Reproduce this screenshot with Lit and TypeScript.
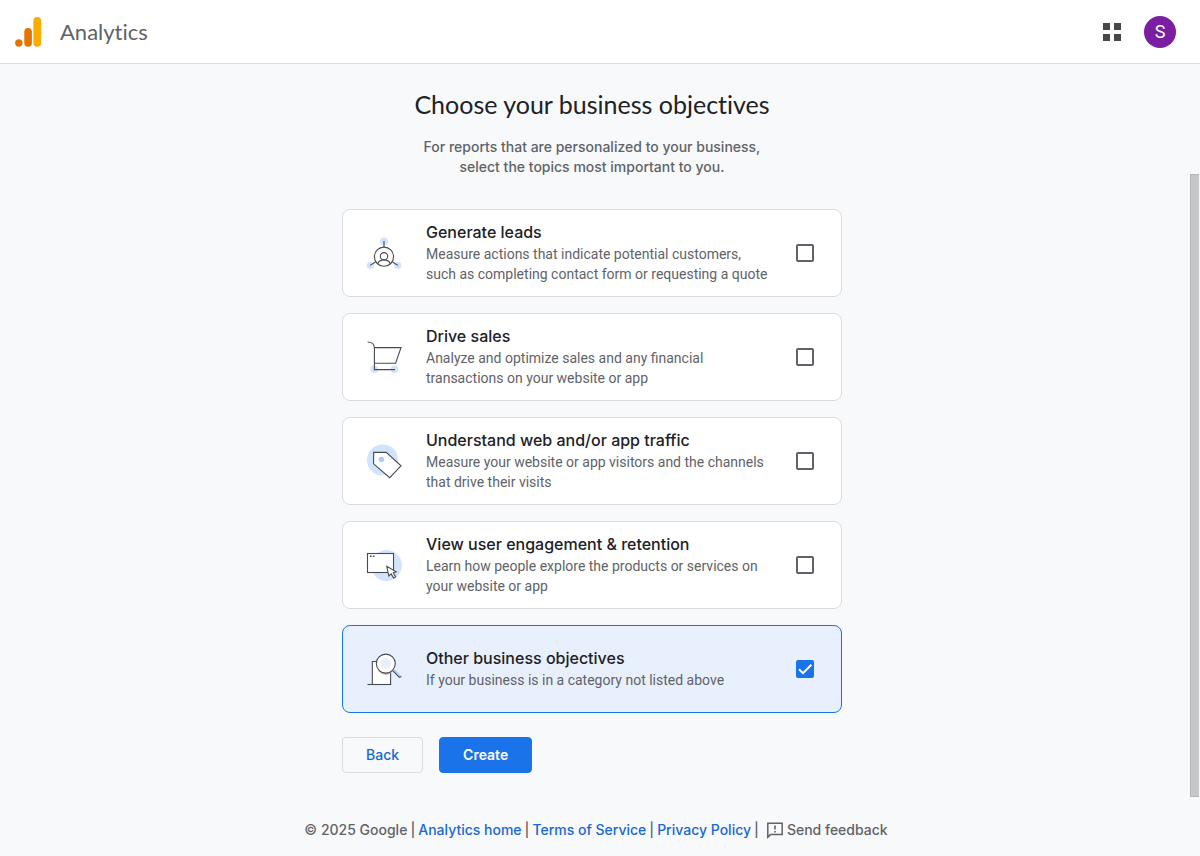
import { LitElement, html, css, svg, TemplateResult } from "lit";
import { customElement, property, state } from "lit/decorators.js";
import { classMap } from "lit/directives/class-map.js";

const leadsIcon = svg`
  <g fill="#d2e3fc"><circle cx="18" cy="6.5" r="4"/><circle cx="4.4" cy="30.5" r="3.6"/><circle cx="31.8" cy="30.5" r="3.6"/></g>
  <g fill="none" stroke="#474b50" stroke-width="1.1">
    <circle cx="18" cy="21.7" r="9.6" fill="#fff"/>
    <circle cx="18" cy="21.3" r="3.7"/>
    <path d="M11.8 29 a6.3 5 0 0 1 12.4 0 M18 6v6 M9.6 27 L4 30.4 M26.4 27 L32 30.4"/>
  </g>`;

const cartIcon = svg`
  <g fill="#d2e3fc"><circle cx="8.3" cy="30.3" r="3.8"/><circle cx="28.5" cy="30.3" r="3.8"/></g>
  <g fill="none" stroke="#474b50" stroke-width="1.1">
    <path d="M1.6 3 C5.4 3 8.4 4.8 8.4 9 V30.6 H29"/>
    <path d="M8.4 8.6 H35 L29.6 24.2 H8.4"/>
  </g>`;

const tagIcon = svg`
  <circle cx="16.6" cy="17" r="15.6" fill="#d2e3fc"/>
  <path d="M7.6 9.4 H20.2 L35 22.8 L23.7 34.7 L7.6 20.8 Z" fill="#fff" stroke="#474b50" stroke-width="1.1"/>
  <circle cx="15.4" cy="16.4" r="2.7" fill="#aecbfa"/>`;

const browserIcon = svg`
  <circle cx="20.5" cy="18.5" r="15.4" fill="#d2e3fc"/>
  <rect x="1.5" y="6.5" width="26" height="19" fill="#fff" stroke="#474b50" stroke-width="1.1"/>
  <path d="M4 9.3 h1.6 M6.8 9.3 h1.6" stroke="#474b50" stroke-width="1.4"/>
  <path d="M20.8 19.3 L22.8 29 L25.2 26.9 L27.6 31 L29.6 29.9 L27.3 25.8 L30.2 24.8 Z" fill="#fff" stroke="#474b50" stroke-width="1.1"/>`;

const searchIcon = svg`
  <path d="M6.3 33.5 V10.5 H24.6 V33.5" fill="#fff" stroke="#474b50" stroke-width="1.1"/>
  <path d="M1.4 33.5 H25.2" stroke="#474b50" stroke-width="1.1"/>
  <path d="M13 19.5 Q19.5 26 24.6 20.8" fill="none" stroke="#bdc1c6" stroke-width="2"/>
  <circle cx="19.8" cy="12.6" r="9.5" fill="#fff" stroke="#474b50" stroke-width="1.1"/>
  <circle cx="19.8" cy="12.6" r="5.4" fill="#e8f0fe"/>
  <path d="M28 19 L34.4 25.6" stroke="#aecbfa" stroke-width="2"/>
  <path d="M26.4 19.4 L33.4 26.4 L35.4 25.6" fill="none" stroke="#474b50" stroke-width="1.1"/>`;

interface Objective {
  id: string;
  title: string;
  text: string;
  icon: TemplateResult<2>;
}

const objectives: Objective[] = [
  { id: "leads", title: "Generate leads", text: "Measure actions that indicate potential customers, such as completing contact form or requesting a quote", icon: leadsIcon },
  { id: "sales", title: "Drive sales", text: "Analyze and optimize sales and any financial transactions on your website or app", icon: cartIcon },
  { id: "traffic", title: "Understand web and/or app traffic", text: "Measure your website or app visitors and the channels that drive their visits", icon: tagIcon },
  { id: "engagement", title: "View user engagement & retention", text: "Learn how people explore the products or services on your website or app", icon: browserIcon },
  { id: "other", title: "Other business objectives", text: "If your business is in a category not listed above", icon: searchIcon },
];

@customElement("objective-card")
class ObjectiveCard extends LitElement {
  @property({ attribute: false }) item!: Objective;
  @property({ type: Boolean }) checked = false;

  static styles = css`
    :host { display: block; }
    .card {
      display: flex; align-items: center; box-sizing: border-box; min-height: 88px;
      padding: 8px 27px 8px 23px; border: 1px solid #dadce0; border-radius: 8px;
      background: #fff; cursor: pointer;
    }
    .card.selected { background: #e8f0fe; border-color: #1a73e8; }
    .icon { flex: none; width: 36px; height: 36px; margin-right: 24px; }
    .copy { flex: 1; min-width: 0; margin-right: 24px; }
    .title { display: block; margin-bottom: 2px; font: 500 16px/20px Inter, "Open Sans", sans-serif; color: #202124; }
    .text { display: block; font: 400 14px/20px Roboto, sans-serif; color: #5f6368; }
    .box { display: grid; flex: none; }
    .box > * { grid-area: 1 / 1; }
    .input {
      appearance: none; box-sizing: border-box; width: 18px; height: 18px; margin: 0;
      border: 2px solid #5f6368; border-radius: 2px; background: transparent; cursor: pointer;
    }
    .input:checked { background: #1a73e8; border-color: #1a73e8; }
    .tick { width: 18px; height: 18px; pointer-events: none; }
  `;

  private toggle(e: Event) {
    this.checked = (e.target as HTMLInputElement).checked;
  }

  render() {
    return html`
      <label class=${classMap({ card: true, selected: this.checked })} for="choice">
        <svg class="icon" viewBox="0 0 36 36" aria-hidden="true">${this.item.icon}</svg>
        <span class="copy">
          <span class="title">${this.item.title}</span>
          <span class="text">${this.item.text}</span>
        </span>
        <span class="box">
          <input class="input" id="choice" type="checkbox" .checked=${this.checked} @change=${this.toggle}>
          ${this.checked
            ? html`<svg class="tick" viewBox="0 0 18 18" aria-hidden="true"><path d="M3 9.3 L7 13.2 L15.4 4.8" fill="none" stroke="#fff" stroke-width="2"/></svg>`
            : null}
        </span>
      </label>`;
  }
}

@customElement("app-root")
class AppRoot extends LitElement {
  @state() private selected = new Set(["other"]);

  static styles = css`
    :host {
      display: flex; flex-direction: column; min-height: 100vh;
      background: #f8f9fa; color: #202124; font-family: Inter, "Open Sans", sans-serif;
    }
    .top {
      display: flex; align-items: center; box-sizing: border-box; height: 64px;
      padding: 0 24px 0 12px; background: #fff; border-bottom: 1px solid #dadce0;
    }
    .logo { width: 32px; height: 32px; margin-right: 16px; }
    .product { font: 400 22px/28px Lato, sans-serif; font-variant-ligatures: none; color: #5f6368; }
    .actions { display: flex; align-items: center; gap: 20px; margin-left: auto; }
    .apps { display: flex; padding: 0; border: 0; background: none; cursor: pointer; }
    .apps svg { width: 24px; height: 24px; }
    .avatar {
      width: 32px; height: 32px; padding: 0; border: 0; border-radius: 50%;
      background: #7b1fa2; color: #fff; font: 400 18px/32px Roboto, sans-serif; cursor: pointer;
    }
    .body { display: flex; flex: 1; }
    .page { flex: 1; min-width: 0; display: flex; flex-direction: column; }
    .main { box-sizing: border-box; width: 100%; max-width: 500px; margin: 0 auto; padding-top: 25px; }
    .heading { margin: 0 0 18px; font: 400 25px/30px Lato, sans-serif; font-variant-ligatures: none; text-align: center; }
    .intro {
      max-width: 352px; margin: 0 auto 32px; text-align: center;
      font-weight: 500; font-size: 14px; line-height: 20px; color: #5f6368;
    }
    .list { display: grid; gap: 16px; }
    .buttons { display: flex; gap: 16px; margin-top: 24px; }
    .button {
      height: 36px; padding: 0 23px; border: 1px solid #dadce0; border-radius: 4px;
      background: transparent; color: #1967d2; font: 500 14px/20px Inter, "Open Sans", sans-serif; cursor: pointer;
    }
    .button.primary { background: #1a73e8; border-color: #1a73e8; color: #fff; font-weight: 600; }
    .footer {
      display: flex; flex-wrap: wrap; justify-content: center; align-items: center; gap: 3px;
      padding: 47px 0 16px 8px; font-weight: 500; font-size: 14px; line-height: 20px; color: #5f6368;
    }
    .footer a { color: #1967d2; text-decoration: none; }
    .feedback {
      display: flex; align-items: center; gap: 3px; margin-left: 4px; padding: 0; border: 0;
      background: none; color: inherit; font: inherit; cursor: pointer;
    }
    .feedback svg { width: 18px; height: 18px; }
    .gutter { display: flex; flex-direction: column; flex: none; width: 16px; }
    .before { flex: 110; }
    .thumb { flex: 623; box-sizing: border-box; width: 9px; margin-left: 6px; background: #c6c7c8; border: 1px solid #b4b5b6; border-right: 0; }
    .after { flex: 59; }
  `;

  render() {
    return html`
      <header class="top">
        <svg class="logo" viewBox="0 0 32 32" role="img" aria-label="Google Analytics">
          <circle cx="6.8" cy="27" r="3.7" fill="#e37400"/>
          <rect x="12.3" y="12" width="7.6" height="18.7" rx="3.8" fill="#e37400"/>
          <rect x="21.4" y="1" width="7.7" height="29.7" rx="3.8" fill="#f9ab00"/>
        </svg>
        <span class="product">Analytics</span>
        <div class="actions">
          <button class="apps" aria-label="Apps">
            <svg viewBox="0 0 24 24"><path fill="#474747" d="M3 3h7v7H3zM14 3h7v7h-7zM3 14h7v7H3zM14 14h7v7h-7z"/></svg>
          </button>
          <button class="avatar">S</button>
        </div>
      </header>
      <div class="body">
        <div class="page">
          <main class="main">
            <h1 class="heading">Choose your business objectives</h1>
            <p class="intro">For reports that are personalized to your business, select the topics most important to you.</p>
            <div class="list">
              ${objectives.map(o => html`<objective-card .item=${o} .checked=${this.selected.has(o.id)}></objective-card>`)}
            </div>
            <div class="buttons">
              <button class="button">Back</button>
              <button class="button primary">Create</button>
            </div>
          </main>
          <footer class="footer">
            <span>© 2025 Google</span><span>|</span>
            <a href="#home">Analytics home</a><span>|</span>
            <a href="#terms">Terms of Service</a><span>|</span>
            <a href="#privacy">Privacy Policy</a><span>|</span>
            <button class="feedback">
              <svg viewBox="0 0 18 18" aria-hidden="true">
                <path d="M1.8 2.2 H16.2 V13.6 H4.4 L1.8 16.2 Z" fill="none" stroke="#5f6368" stroke-width="1.5"/>
                <path d="M9 4.4 V8.4 M9 9.9 V11.5" stroke="#5f6368" stroke-width="1.6"/>
              </svg>
              Send feedback
            </button>
          </footer>
        </div>
        <div class="gutter" aria-hidden="true">
          <div class="before"></div><div class="thumb"></div><div class="after"></div>
        </div>
      </div>`;
  }
}
